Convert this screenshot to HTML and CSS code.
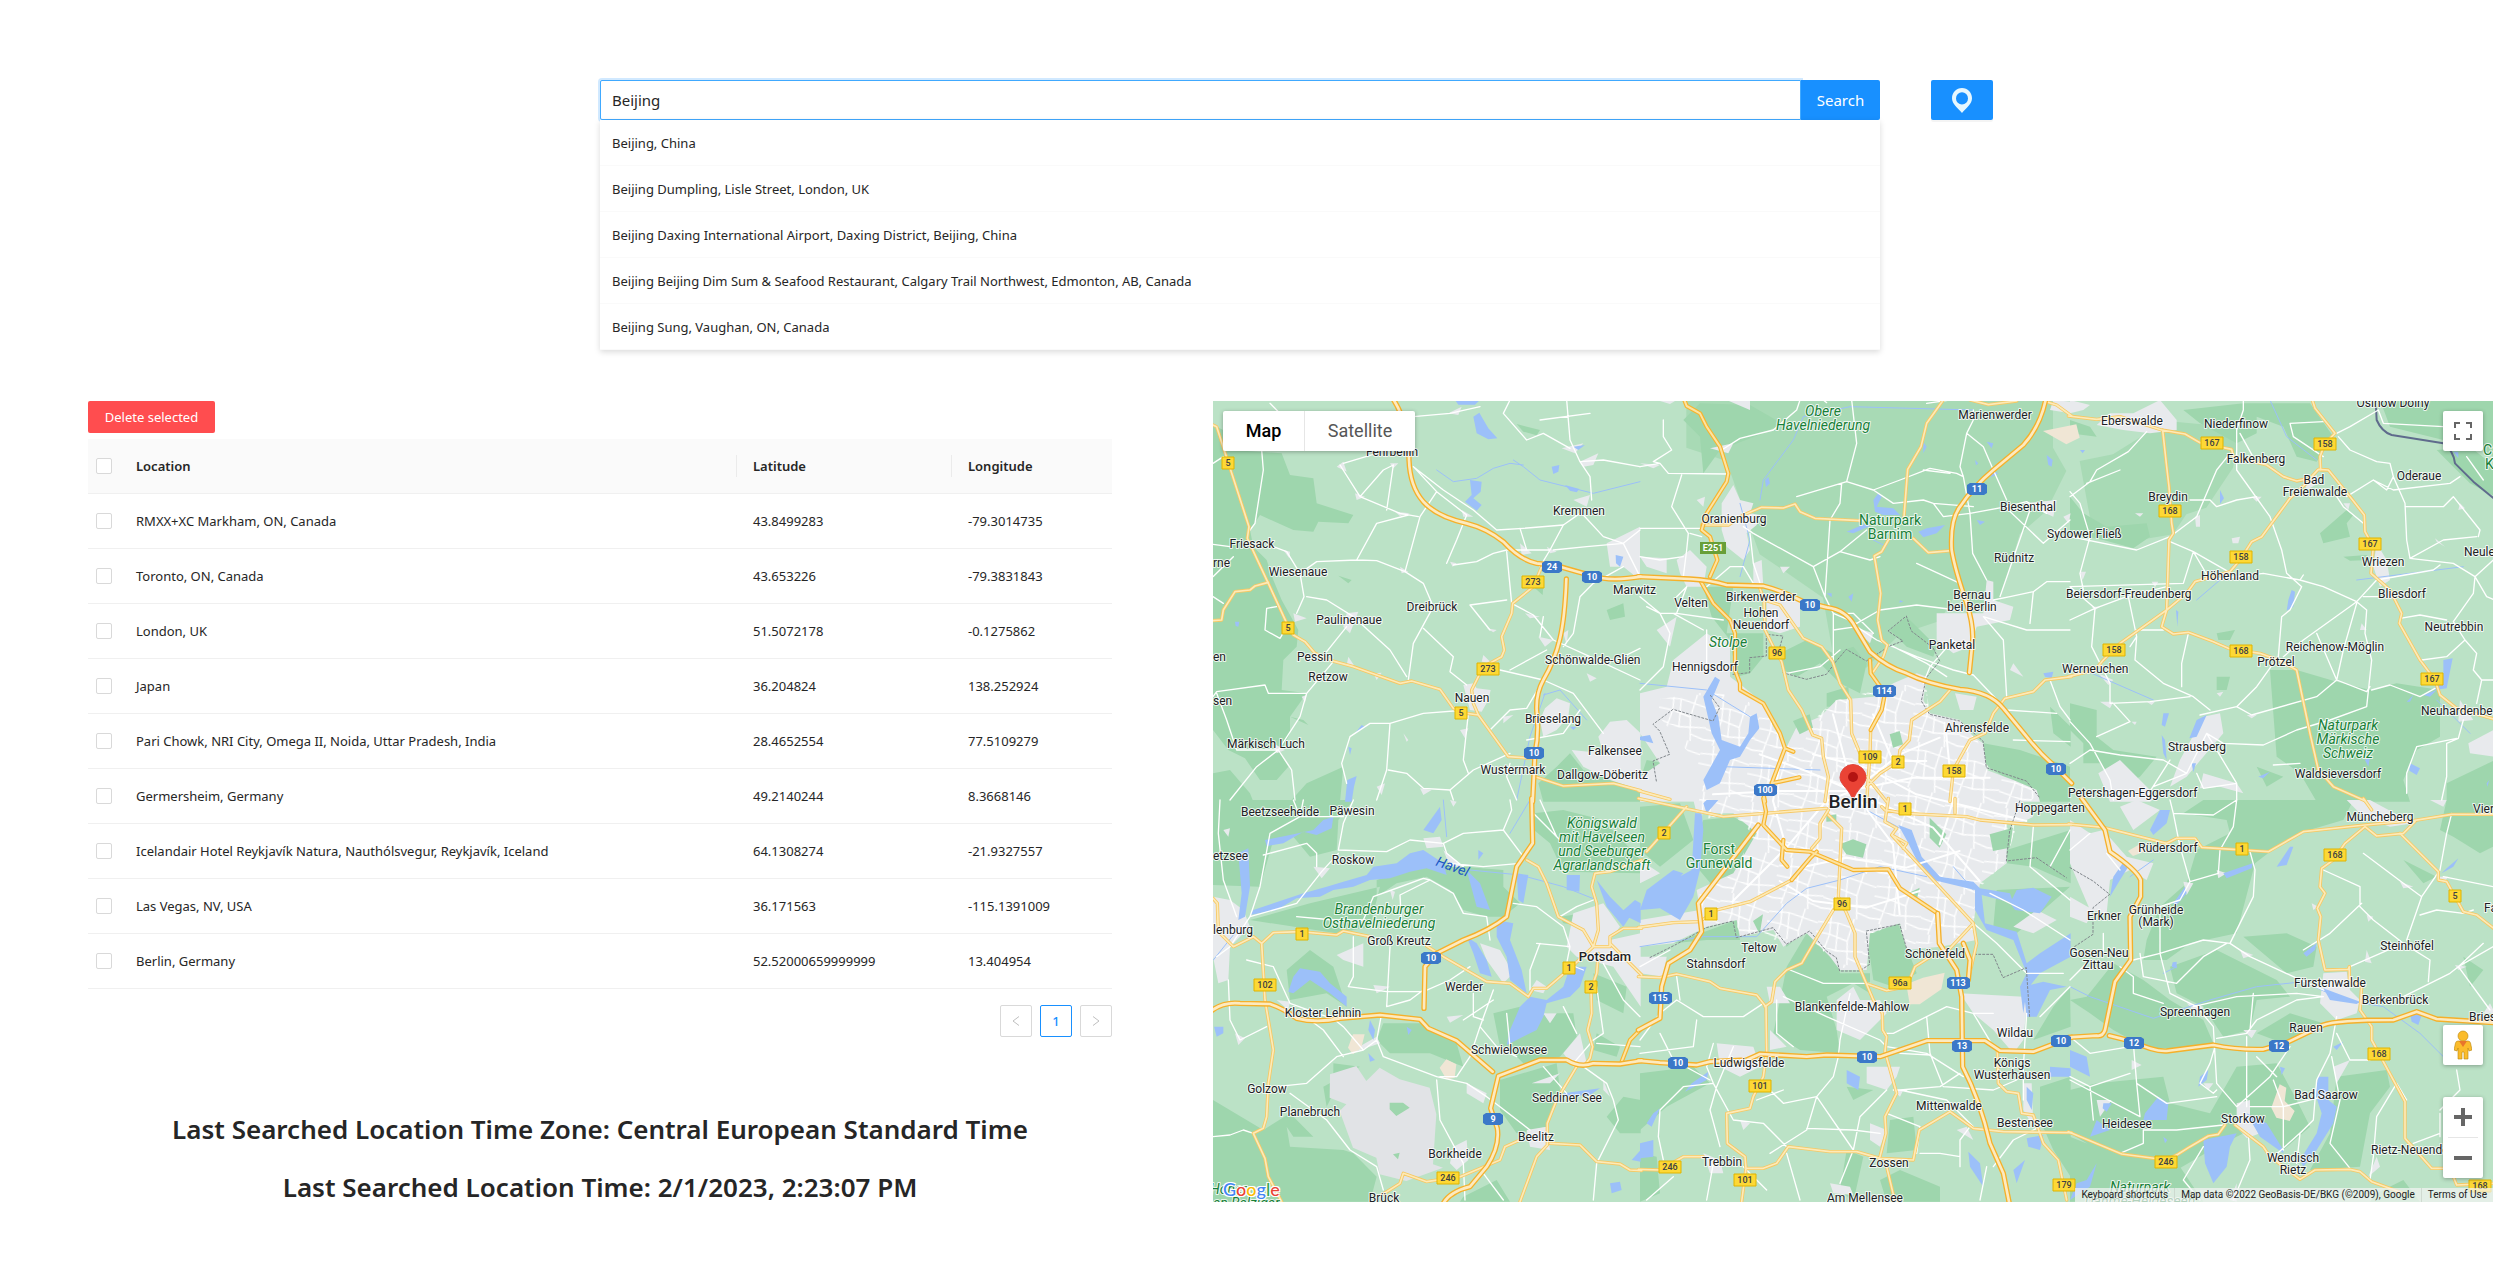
FILE: index.html
```html
<!DOCTYPE html>
<html lang="en">
<head>
<meta charset="utf-8">
<title>Location search</title>
<link rel="stylesheet" href="styles.css">
</head>
<body>
<main class="page">
  <form class="search">
    <div class="search-field">
      <div class="search-group">
        <input class="search-input" type="text" aria-label="Search location" value="Beijing">
        <button class="btn btn-search" type="button">Search</button>
      </div>
      <ul class="suggestions">
        <li class="suggestion">Beijing, China</li>
        <li class="suggestion">Beijing Dumpling, Lisle Street, London, UK</li>
        <li class="suggestion">Beijing Daxing International Airport, Daxing District, Beijing, China</li>
        <li class="suggestion">Beijing Beijing Dim Sum &amp; Seafood Restaurant, Calgary Trail Northwest, Edmonton, AB, Canada</li>
        <li class="suggestion">Beijing Sung, Vaughan, ON, Canada</li>
      </ul>
    </div>
    <button class="btn btn-locate" type="button" aria-label="Use my location">
      <svg width="20" height="25" viewBox="0 0 20 25"><path fill="#e6f7ff" fill-rule="evenodd" d="M10 0C4.300 0 0 4.500 0 10.200 0 16 5.500 19.500 10 25c4.500-5.500 10-9 10-14.800C20 4.500 15.700 0 10 0zm0 4.200a6 6.200 0 1 1 0 12.400 6 6.200 0 0 1 0-12.400z"/></svg>
    </button>
  </form>

  <div class="content">
    <section class="history">
      <button class="btn btn-delete" type="button">Delete selected</button>
      <table class="table">
        <colgroup><col class="col-check"><col><col class="col-lat"><col class="col-lng"></colgroup>
        <thead>
          <tr><th class="check"><input type="checkbox" aria-label="Select all"></th><th class="split">Location</th><th class="split">Latitude</th><th>Longitude</th></tr>
        </thead>
        <tbody>
          <tr><td class="check"><input type="checkbox" aria-label="Select Markham"></td><td>RMXX+XC Markham, ON, Canada</td><td>43.8499283</td><td>-79.3014735</td></tr>
          <tr><td class="check"><input type="checkbox" aria-label="Select Toronto"></td><td>Toronto, ON, Canada</td><td>43.653226</td><td>-79.3831843</td></tr>
          <tr><td class="check"><input type="checkbox" aria-label="Select London"></td><td>London, UK</td><td>51.5072178</td><td>-0.1275862</td></tr>
          <tr><td class="check"><input type="checkbox" aria-label="Select Japan"></td><td>Japan</td><td>36.204824</td><td>138.252924</td></tr>
          <tr><td class="check"><input type="checkbox" aria-label="Select Pari Chowk"></td><td>Pari Chowk, NRI City, Omega II, Noida, Uttar Pradesh, India</td><td>28.4652554</td><td>77.5109279</td></tr>
          <tr><td class="check"><input type="checkbox" aria-label="Select Germersheim"></td><td>Germersheim, Germany</td><td>49.2140244</td><td>8.3668146</td></tr>
          <tr><td class="check"><input type="checkbox" aria-label="Select Reykjavík"></td><td>Icelandair Hotel Reykjavík Natura, Nauthólsvegur, Reykjavík, Iceland</td><td>64.1308274</td><td>-21.9327557</td></tr>
          <tr><td class="check"><input type="checkbox" aria-label="Select Las Vegas"></td><td>Las Vegas, NV, USA</td><td>36.171563</td><td>-115.1391009</td></tr>
          <tr><td class="check"><input type="checkbox" aria-label="Select Berlin"></td><td>Berlin, Germany</td><td>52.52000659999999</td><td>13.404954</td></tr>
        </tbody>
      </table>
      <nav class="pagination" aria-label="Pages">
        <button class="page-btn" type="button" disabled aria-label="Previous page"><svg width="8" height="12" viewBox="0 0 8 12"><path d="M7 1.500 1 6l6 4.500"/></svg></button>
        <button class="page-btn page-current" type="button">1</button>
        <button class="page-btn" type="button" disabled aria-label="Next page"><svg width="8" height="12" viewBox="0 0 8 12"><path d="M1 1.500 7 6l-6 4.500"/></svg></button>
      </nav>
      <div class="summary">
        <h2 class="summary-line">Last Searched Location Time Zone: Central European Standard Time</h2>
        <h2 class="summary-line">Last Searched Location Time: 2/1/2023, 2:23:07 PM</h2>
      </div>
    </section>

    <section class="map" aria-label="Map">
      <svg class="map-canvas" viewBox="0 0 1280 801" preserveAspectRatio="xMidYMid slice">
        <defs>
          <pattern id="streets" width="150" height="140" patternUnits="userSpaceOnUse" patternTransform="rotate(12)">
            <path class="street" d="M0 30 60 22 150 34M0 95 70 105 150 92M35 0 42 60 30 140M105 0 98 70 112 140M42 60 98 70M60 22 70 105M0 60 42 60M112 120 150 128M0 128 30 125"/>
          </pattern>
          <g id="highways">
            <g transform="translate(-9,-3)">
              <path d="M548-5Q597 70 597 180 600 260 640 305 680 350 770 370 830 385 880 425 930 480 980 490L1040 497Q1100 515 1150 528 1200 545 1292 530M1069 537Q1065 650 1050 715 1035 780 1000 840 978 880 980 930 988 1000 975 1060L968 1205"/>
            </g>
            <g transform="translate(1281,-3)">
              <path d="M-5 530 150 537Q210 540 260 555L370 558Q420 570 490 605L560 622Q620 630 645 680L690 755Q740 800 800 820 860 850 960 868 1050 875 1090 925L1160 1010Q1200 1060 1240 1095L1295 1150M1217 0Q1200 80 1150 135L1060 210Q1000 260 960 320 930 360 935 450 945 510 980 610 1000 670 998 720L988 818"/>
            </g>
            <g transform="translate(-9,1197)">
              <path d="M965-5 968 130 920 200 890 350Q840 390 760 420L680 460 645 500 642 625M5 632Q40 605 90 610L180 612Q220 625 260 655 320 670 390 655L510 645 630 658 655 685 740 722 848 815M1295 782 1230 792 1150 790Q1110 805 1070 780L990 780 865 828 842 925 862 985Q870 1040 830 1100L780 1160Q720 1175 700 1210"/>
            </g>
            <g transform="translate(1281,1197)">
              <path d="M-5 782 60 788 170 795 210 785 320 780 360 762 500 770 560 765 720 770 860 722 1035 722 1080 752 1180 755 1295 712M893 340 898 430 950 510 965 590 968 800Q1020 900 1050 1030L1090 1120 1108 1210M-5 690 60 655 65 560 85 490 150 450 185 395 175 310 355 75M970 430 990 480 985 540"/>
            </g>
            <g transform="translate(2571,1197)">
              <path d="M35-5 105 90 120 155Q200 210 212 240L212 290 180 350 182 480 135 545 105 690Q98 710 80 707L-5 712M118 707 190 725Q250 755 290 753L430 735Q500 750 580 748L650 728 760 675Q800 660 970 660L1040 635 1100 657 1275 668"/>
            </g>
          </g>
          <g id="ring">
            <g transform="translate(1281,-3)"><path d="M133 0 140 18 180 40 200 80 240 140 265 220 260 245 200 340 185 390 210 410 232 480 210 530M180 540 220 610 270 660 285 700 285 810 300 850 300 870 370 910 420 1000 435 1045 395 1150M435 1045 460 1055M395 1150 478 1132M370 1180 375 1205M690 780 692 820 735 880 725 930 692 990"/></g>
            <g transform="translate(1281,1197)"><path d="M370-5 378 35 370 75 440 150 510 155 640 210 745 208 780 265 893 340M455 240 510 175 530 155M430 120 425 180 442 200"/></g>
            <g transform="translate(-9,1197)"><path d="M1295 685 1260 720 1235 785"/></g>
          </g>
          <g id="arterials">
            <g transform="translate(-9,-3)">
              <path d="M9 75 20 80 117 380 112 415 175 550 235 680 250 705 285 725 315 760 375 785 430 800 570 850 605 843 690 868 730 925 755 938 805 945 895 1070 965 1075M9 662 35 660 40 630 75 575 120 570 135 558 175 547M995 500 970 560 908 610 905 640 875 710 883 750 875 770 820 800 785 870 790 910 805 945M975 1130 1060 1158 1210 1150 1292 1172"/>
            </g>
            <g transform="translate(1281,-3)">
              <path d="M185 375 265 375 310 345 365 322 430 324 465 312 480 335 525 355 660 362M910 0 860 70 843 140 803 208 792 350M820 415 865 458 935 452M745 420 725 455 703 468 722 580 713 660 725 720 742 735 730 770 700 815M990 0 1045 14 1130 3M1218 5 1250 15 1295 48M358 560 372 600 375 690 410 760 425 785 445 870 485 930 518 1005 545 1015 550 1070 565 1130 555 1205M372 600 420 615 490 715 545 740 578 785 600 850 632 900 635 1000 660 1060M692 990 690 1060 680 1205M930 870 900 905 815 960 808 1020 780 1050 775 1085 720 1120 680 1160M1295 830 1215 840 1180 875 1095 895 1060 940 1035 1000 990 1020 940 1110 930 1205M680 1130 740 1205M-5 1172 90 1198"/>
            </g>
            <g transform="translate(2571,-3)">
              <path d="M-5 48 80 58 150 50 275 90 345 102 390 128 485 148 490 170 590 195 640 230 680 243 720 235 745 208 775 210 840 290 883 345 885 395 910 440 903 520 960 570 995 640 988 670 1050 780 1095 840 1110 885 1160 925 1275 958M727 0 735 25 795 100 765 130 750 170 752 210M278 90 290 200 297 260 305 370 310 400 297 420 290 630 275 680 310 702 355 697 430 725 475 745 570 760 625 780 680 810 720 1000 745 1110 790 1160 885 1202M720 240 660 295 575 410 545 425 510 480 480 515 375 545 350 580 290 630 150 730 100 780 75 810-5 830"/>
            </g>
            <g transform="translate(-9,1197)">
              <path d="M9 295 22 310 25 395 70 440 130 410 155 430 190 398 270 395 380 405 400 393 480 410M650 438 700 470 830 545 900 550 955 590 970 565 1010 565 1080 505 1150 440 1120 390 1045 350 1010 250 985 200 950 180M155 430 165 600 190 750 175 850 170 950 160 985 130 1000 165 1075 175 1130 215 1205M1295 385 1240 385 1200 410 1200 440 1150 440M1200 430 1295 525M1150 440 1165 390 1160 310 1145 260 1155 220 1200 215 1295 180M1165 460 1160 520 1143 570 1145 640 1133 690 1148 740 1140 775 1125 795M1100 800 1040 900 1012 970 1012 1010 1012 1035 980 1070 930 1205M515 1185 570 1150 580 1120 650 1145 750 1130 870 1080 885 1040 925 1022M1020 1030 1110 1035 1160 1085 1230 1092 1260 1110 1295 1112"/>
            </g>
            <g transform="translate(1281,1197)">
              <path d="M-5-5 250 50 560 25M140 20 20 155M725 20 735 30 795 40 980 50 1020 60 1180 75 1295 74M945-5 945 40M565 30 540 70 540 115 515 145M565 45 605 85 595 290 620 340 645 400 645 470 700 600 727 640 728 690 740 710 735 755 770 880 735 950 738 1000 720 1070M740 1100 765 1205M745-5 735 65 770 85 755 105 1000 370 930 445M1000 370 1010 430 985 540M755 105 800 130 790 145M455 240 330 305 230 330 180 365 100 368-5 382M580 330 520 430 485 490 440 510 405 545 395 605 375 620M-5 530 60 533 110 522 210 545 240 565 350 585 378 620 380 755 370 830 340 890 330 925 260 940 262 1030 315 1070 318 1105 370 1105 410 1090 445 1040 570 1055 650 1055 720 1075 820 1080 838 990 930 935 1000 985 1090 995 1295 998M318 1105 305 1205M1072 750 1075 850 1100 875 1135 880 1145 940 1180 945 1210 1030 1255 1080 1280 1200M-5 1108 60 1110 130 1070 190 1070M683 552 740 572 800 560 825 500 880 465"/>
            </g>
            <g transform="translate(2571,1197)">
              <path d="M-5 72 100 82 290 130 320 115 375 115 395 142 595 155 700 95 885 75 1030 62 1145 43 1275 43M880-5 905 30M885 80 825 130 790 180 755 205 750 260 765 280 742 325 752 350 745 420 765 510 835 508 838 500 838 540 875 560 870 630 905 680 905 720 1005 905 1005 1015 1085 1105 1120 1105M885 80 920 108 1000 100 1035 65M990 100 1105 215 1105 240 1130 245 1180 335 1220 345 1275 388M-5 995 155 1062 290 1080 325 1062 360 1040 415 1008 445 1003 465 975M495 975 580 1040 600 1070 690 1138 735 1110 840 1108 870 1115 905 1145 1000 1180M1150 1130 1160 1155 1275 1150"/>
            </g>
          </g>
        </defs>

        <g transform="scale(.3333333)">
          <rect class="land" width="3840" height="2403"/>

          <!-- nature parks and forests -->
          <path class="park" d="M1420 0H2520V140L2560 210 2500 330 2420 400 2360 600 2280 640 2240 560 2180 660 2060 700 1960 800 1860 760 1830 590 1700 500 1640 460 1540 180 1420 140ZM2600 180 2700 160 2860 60 3080 80 3060 200 2980 320 2920 340 2880 400 2760 420 2640 400Z"/>
          <g class="forest">
            <path transform="translate(-9,-3)" d="M9 75 50 95 70 150 215 160 240 225 310 235 320 310 430 345 415 370 325 365 310 395 250 390 150 345 120 390 130 440 170 480 190 540 215 600 265 690 260 740 220 780 215 870 290 880 240 950 240 1000 210 1060 235 1100 200 1140 150 1140 105 1075 55 1050 9 990ZM9 1120 60 1110 120 1180 130 1205H9ZM240 1205 290 1150 400 1100 390 1205ZM920 72 990 90 980 106 940 95ZM1040 1100 1080 1060 1120 1110 1292 1160V1205H1000L985 1150ZM385 527 425 540 415 550ZM240 950 280 960 295 975ZM970 560 1000 555 998 585ZM1190 630 1240 610 1245 650 1200 660Z"/>
            <path transform="translate(1281,-3)" d="M130 60 180 10 330 15 425 70 370 100 240 150 190 220 180 110ZM190 560 280 560 260 700 370 700 370 770 330 820 290 830 270 720 215 650ZM420 760 500 720 580 760 640 740 680 790 660 880 600 850 540 790 470 830 430 810ZM750 690 800 650 850 700 890 740 880 770 800 740ZM560 880 625 860 630 920 560 920ZM230 960 330 890 400 970 380 1010 230 1040ZM1030 1030 1140 1050 1290 1100V1205H1200L1120 1150 1030 1090ZM20 1080 70 1090 60 1130 0 1140ZM100 1150 200 1130 200 1205H60ZM1230 920 1292 980V1040L1240 1000Z"/>
            <path transform="translate(2571,-3)" d="M340 30 520 10 720 10 790 110 740 185 680 170 640 80 560 50 560 100 500 130 390 70ZM930 0H1270V170L1240 150 1120 120 960 80ZM1100 150 1200 140 1275 200 1275 290 1200 250 1150 200ZM0 290 40 340 110 380 230 370 240 410 190 445 100 420 0 400ZM750 400 830 330 850 345 830 370 840 410 760 430ZM820 470 890 465 900 480 840 482ZM600 810 680 810 800 845 900 870 980 850 1110 870 1110 1010 1040 1050 1000 1140 1020 1205H740L690 1120 620 1070ZM1130 1150 1275 1080V1205H1130ZM440 830 480 830 470 870 440 870ZM0 910 80 930 80 1010 130 1050 260 1070 210 1130 150 1160 90 1090 40 1090 40 1030 0 990ZM440 700 495 690 480 720 445 720ZM560 1100 640 1130 590 1160ZM0 60 60 80 80 110 0 100Z"/>
            <path transform="translate(-9,1197)" d="M9 0H430L385 60 380 150 300 170 250 110 190 120 150 260 9 255ZM500 290 560 250 650 230 720 270 760 330 830 350 880 350 930 310 880 260 880 210 760 200 640 190 500 240ZM510 260 480 380 380 400 120 360 300 310ZM230 510 300 450 370 500 410 620 350 580 240 600ZM970 40 1060 30 1180 60 1292 180V220L1060 215 1020 130 960 80ZM520 670 640 670 740 730 760 800 660 760 540 760 500 720ZM850 640 930 620 900 740 870 740ZM1010 640 1090 640 1100 710 1050 770 940 790 880 730ZM1150 520 1250 560 1240 640 1160 600ZM870 840 1040 790 1050 870 1010 980 920 1000 870 930ZM9 900 160 990 240 940 310 1010 250 1010 230 980 240 1040 400 1050 430 1060 500 1130 480 1205H160L130 1000 9 1010ZM370 790 450 800 340 860 350 920 370 880ZM1190 950 1240 890 1292 900V1000L1230 1000ZM760 1190 860 1140 900 1205H750ZM1160 700 1230 740 1220 770 1150 750ZM1050 350 1120 340 1130 380 1060 370ZM9 1000 170 1000 175 1205H9Z"/>
            <path transform="translate(1281,1197)" d="M0 20 120 10 160 120 60 200 0 150ZM190 60 280 50 350 90 320 210 220 260 170 200 170 110ZM440 500 500 400 590 480 600 520 690 520 690 580 640 550 560 590 590 690 600 760 480 750 400 700 420 600ZM670 410 770 360 800 440 830 520 760 560 700 540 690 470ZM100 430 290 360 300 420 200 420ZM630 130 670 120 680 160 640 165ZM1100 150 1292 90V250L1180 200 1100 190ZM1070 270 1290 260 1130 400 1060 380ZM1290 560 1240 620 1180 720 1292 680ZM1200 860 1292 830V1130L1240 1050 1200 960ZM0 820 160 800 210 850 80 920 0 990ZM750 960 820 950 830 1050 740 1060ZM720 1140 780 1110 900 1160V1205H740ZM620 1050 670 1070 640 1205 600 1170ZM400 390 450 380 500 390 440 440ZM440 620 540 640 580 680 560 720ZM620 860 700 870 680 880 640 900ZM0 1060 50 1070 60 1180 0 1205ZM820 270 840 260 830 300ZM930 50 960 130 1000 190 960 180Z"/>
            <path transform="translate(2571,1197)" d="M400 0H850L820 60 700 95 600 155 555 190 500 400 360 430 290 480 220 480 230 420 270 320 350 250 380 150 480 100 470 60 340 40ZM1130 0H1270V140L1230 160 1150 110 1110 90ZM0 600 50 590 130 490 220 540 300 600 400 660 430 730 380 745 230 745 130 690 60 640ZM300 500 440 450 620 540 660 590 560 600 540 690 460 710 400 620 320 580ZM520 410 650 400 740 440 730 500 650 520ZM660 640 760 670 640 730 560 700ZM800 830 950 810 960 860 900 940 870 1100 720 1110 780 1000ZM0 870 80 850 280 830 300 910 420 940 500 800 620 790 680 900 720 980 640 1050 560 980 440 1040 320 1110 200 1090 100 1060 0 1000ZM0 1010 150 1070 330 1100 400 1205H0ZM1000 180 1100 230 1060 250ZM1180 470 1240 510 1200 560ZM920 1180 1000 1140 1050 1205H900ZM600 860 640 950 600 990 540 950ZM480 0 570 0 560 30Z"/>
          </g>

          <!-- built-up areas -->
          <g class="urban">
            <path transform="translate(-9,-3)" d="M760 855 790 850 800 865 842 870 835 900 815 935 780 930ZM1005 925 1040 895 1080 910 1075 950 1040 990 1000 1010 990 960ZM1085 1050 1180 1060 1165 1010 1200 965 1250 960 1292 1000V1170L1200 1140 1120 1100ZM380 200 400 185 410 215ZM435 280 465 290 440 300ZM555 335 600 340 570 348ZM715 40 755 20 745 45ZM1055 145 1120 130 1095 160ZM1110 185 1165 160 1150 195 1120 200ZM410 640 445 635 420 700 400 680ZM945 640 990 650 960 655ZM985 710 1030 720 1005 740ZM220 450 240 455 238 475ZM250 640 290 655 255 665ZM930 430 965 460 935 465ZM1010 440 1040 455 1020 460ZM1190 430 1290 380V540L1240 500 1200 500ZM490 820 515 818 500 840ZM415 770 435 800 410 795ZM820 765 845 790 815 785ZM830 685 860 690 850 697ZM580 1000 595 1020 590 1025ZM750 990 775 985 765 1015ZM500 1160 525 1150 515 1185ZM630 1165 665 1170 640 1185ZM190 1030 225 1050 200 1060ZM880 950 910 945 880 970ZM275 890 290 885 285 908ZM540 190 565 190 550 205ZM1090 300 1140 285 1130 320ZM755 330 790 350 760 350ZM570 500 595 515 575 520ZM1130 820 1160 835 1140 845ZM720 485 740 490 728 500ZM1060 700 1075 690 1070 735Z"/>
            <path transform="translate(1281,-3)" d="M245 310 280 255 300 300 340 310 330 340 360 345 350 375 320 400 330 450 310 480 260 440 245 390ZM110 480 150 450 200 500 190 560 140 560 120 520ZM340 490 365 480 370 560 340 560ZM0 880 80 860 100 780 200 700 230 720 270 720 270 830 310 860 370 910 400 980 440 1040 470 980 540 950 590 900 700 890 760 850 830 820 860 830 850 900 870 940 960 960 1000 1010 1030 1030 1040 1110 1120 1140 1190 1170 1200 1205H0V1130L60 1090 0 1000ZM380 580 480 590 480 680 420 700 380 690ZM890 640 1030 640 1040 540 1060 545 1060 600 1120 620 1110 660 1010 680 990 740 940 760 890 720ZM260 0 330 0 330 30ZM210 145 280 130 265 160ZM170 300 195 290 190 320ZM0 470 80 475 80 520 20 500ZM50 690 110 650 90 740ZM50 0 110 0 90 12ZM1240 0 1292 5V40L1230 30ZM1150 310 1250 300 1240 350ZM420 500 450 500 430 520ZM945 880 1010 890 1000 930 960 930ZM640 680 700 700 690 730ZM1120 790 1150 830 1110 810ZM0 190 60 195 40 205ZM1270 350 1292 340 1285 370Z"/>
            <path transform="translate(2571,-3)" d="M190 40 270 0 320 60 320 90 240 100 160 90 80 75 120 40ZM920 430 950 480 960 540 930 560 910 500ZM400 950 450 940 460 1000 400 1070 350 1130 300 1160 330 1080ZM1170 900 1210 960 1165 965ZM1195 1030 1270 990V1070L1200 1060ZM0 0 60 15 40 30 0 40ZM400 1120 500 1150 520 1180 450 1160 390 1165ZM85 1120 150 1080 260 1190 240 1205 120 1205ZM85 820 130 840 115 855ZM820 310 840 310 835 330ZM485 415 510 410 505 430 488 430ZM195 340 220 340 210 350ZM545 290 575 290 560 305ZM1170 310 1185 325 1165 330ZM1095 415 1125 440 1100 425ZM245 545 265 545 255 562ZM65 620 90 620 75 630ZM30 515 48 515 38 540ZM90 905 130 905 120 925ZM185 965 200 965 195 975ZM875 670 890 690 870 690ZM530 945 560 945 545 955ZM375 350 390 345 390 380 378 380ZM440 880 460 875 450 890ZM700 240 740 225 745 250 710 270ZM230 905 255 905 245 915Z"/>
            <path transform="translate(-9,1197)" d="M9 290 60 300 100 330 120 380 60 440 55 540 25 550 9 470ZM1090 340 1180 310 1230 380 1200 420 1292 400V620L1210 500 1100 470 1070 440ZM640 115 690 110 700 140 650 145ZM700 150 760 200 720 200ZM310 200 360 205 335 235ZM810 430 870 450 910 520 880 550 830 480ZM380 465 460 430 460 500 400 480ZM980 540 1010 560 1000 580 960 570ZM770 850 830 880 820 910 770 880ZM730 1040 770 1020 775 1080 740 1110 720 1090ZM950 990 1010 980 1020 1050 960 1040ZM1060 760 1110 700 1130 790 1090 800ZM430 750 500 710 510 730 450 750ZM75 700 105 715 85 735ZM710 650 760 645 720 668ZM200 600 240 605 235 630ZM490 555 540 560 500 580ZM965 850 1050 820 1020 850ZM1180 840 1200 890 1180 870ZM720 0 740 5 730 20ZM1000 640 1040 640 1020 670ZM40 90 60 85 55 110ZM540 270 555 275 548 300Z"/>
            <path transform="translate(1281,1197)" d="M160 0 1130-5 1180 50 1140 70 1100 60 1100 190 1020 250 1000 370 1010 420 900 440 800 450 780 370 690 400 680 510 600 510 570 470 500 400 430 440 400 390 300 410 290 360 200 380 100 430 0 440V360L180 330 170 270 280 220 350 100 280 40 170 40ZM0 470 80 470 70 530 0 520ZM590 600 640 560 660 600 720 600 740 640 660 720 590 690ZM960 580 1150 590 1160 620 1150 720 1120 760 1060 690 1000 640ZM680 800 780 800 770 830 740 870 680 850ZM230 730 340 740 360 800 300 830 240 800ZM380 560 420 560 450 610 390 610ZM690 970 740 990 720 1040 690 1020ZM190 1060 240 1080 250 1120 210 1120ZM1150 850 1175 850 1180 980 1150 930ZM1120 380 1190 330 1250 360 1180 400ZM0 180 60 220 0 250ZM570 1150 630 1160 640 1185 580 1180ZM390 690 440 740 390 750ZM950 990 980 980 1000 1020ZM760 870 790 870 780 890ZM300 960 330 970 310 990ZM1080 640 1140 640 1130 680Z"/>
            <path transform="translate(2571,1197)" d="M0 60 60 100 100 90 170 170 250 190 230 240 180 210 120 240 110 340 60 330 0 190ZM150 20 200 0 270 30 190 90ZM760 520 830 515 840 570 870 600 860 640 800 660 750 610ZM500 910 540 900 540 960 570 1000 530 1015 500 980ZM1080 0H1130L1120 20ZM80 900 125 900 90 950ZM510 450 550 465 520 475ZM520 690 560 690 545 715ZM350 610 400 620 380 640ZM110 200 150 190 140 240ZM340 245 370 250 350 285ZM440 210 470 220 445 235ZM990 245 1030 260 1000 265ZM890 450 905 490 885 485ZM890 345 910 350 895 365ZM1105 230 1135 230 1120 250ZM920 1070 895 1130 930 1100ZM1240 640 1275 640 1260 610ZM185 780 215 795 185 810ZM725 310 745 320 730 330ZM480 1200 500 1150 500 1205ZM0 290 70 330 50 370 0 350ZM830 0 900 0 1030 70 960 80 880 50ZM1155 495 1190 500 1165 510ZM400 850 430 850 415 870ZM790 800 840 780 800 850Z"/>
          </g>
          <path class="fallow" d="M351 2020 430 1995 460 2040 500 2000 560 2035 650 2060 670 2140 660 2290 690 2300 580 2340 500 2320 490 2270 420 2240 380 2130 400 2110 350 2090Z"/>
          <path class="forest" d="M530 2105 570 2105 590 2120 550 2145 530 2125ZM540 2260 560 2255 555 2275Z"/>
          <path class="sand" d="M405 1940 420 1900 455 1900 445 1940 420 1960ZM680 2000 700 1975 730 1990 725 2030 700 2035ZM2080 1750 2130 1730 2195 1715 2185 1765 2120 1810 2090 1810ZM2490 90 2590 70 2600 110 2560 130ZM3175 2120 3200 2050 3220 2060 3215 2100 3245 2130 3230 2160 3190 2150ZM2745 1350 2780 1330 2800 1350 2760 1365Z"/>

          <path class="city-grid" d="M1300 900 1500 870 1660 920 1720 1040 1860 900 2060 850 2140 860 2150 940 2290 1010 2330 1110 2480 1170 2420 1240 2380 1380 2290 1470 2280 1600 2090 1640 2050 1570 1970 1600 1960 1700 1880 1700 1780 1600 1700 1620 1580 1590 1560 1560 1450 1580 1460 1480 1560 1420 1620 1300 1560 1240 1440 1260 1480 1120Z"/>
          <path class="forest" d="M1880 1330 1920 1315 1960 1330 1950 1370 1900 1360ZM1740 960 1790 940 1800 980 1760 1000ZM2150 1250 2200 1300 2180 1340 2150 1310ZM2330 1300 2400 1280 2390 1340 2340 1350ZM1840 1245 1870 1240 1870 1260 1840 1262ZM2030 1000 2060 990 2070 1030 2040 1040ZM1620 1560 1650 1540 1640 1600ZM2080 1480 2120 1460 2110 1500Z"/>

          <!-- water -->
          <g class="water">
            <path transform="translate(-9,-3)" d="M790 50 808 38 835 85 862 115 835 118 800 100ZM780 240 815 245 812 275 790 295 815 315 800 332 765 305 785 285ZM735 0H810L795 14 745 14ZM1025 200 1048 195 1045 215 1030 222ZM1065 255 1108 267 1100 277 1080 272ZM435 1000 455 975 467 982ZM412 1140 440 1128 432 1160 425 1205H405ZM1217 465 1240 470 1230 500 1218 490ZM75 665 88 665 85 680 77 678ZM415 1040 425 1045 420 1065ZM1090 140 1125 135 1105 150ZM1080 980 1100 980 1090 990Z"/>
            <path transform="translate(1281,-3)" d="M375 240 385 230 390 250 378 262ZM700 300 715 280 725 290 710 320 760 325 780 345 730 345 705 335ZM835 395 860 385 915 375 890 400 850 412ZM1040 125 1060 130 1055 145ZM1220 165 1238 180 1235 200 1225 195ZM1005 180 1015 190 1008 196ZM850 125 860 140 850 160ZM620 395 680 370 690 378 640 400ZM560 580 575 580 575 592ZM625 590 640 580 635 605ZM330 950 350 940 358 985 330 1020 300 1070 270 1080 240 1150 200 1170 190 1140 240 1050 215 1000 190 890 225 830 240 840 215 900 235 950 245 1020 300 1040 325 1000ZM1210 820 1240 815 1235 835 1215 830ZM1050 210 1075 220 1055 232ZM1010 360 1035 365 1020 375ZM780 600 790 605 778 608ZM0 1010 30 1005 40 1030 0 1020Z"/>
            <path transform="translate(2571,-3)" d="M665 570 675 575 670 620 650 632 655 600ZM1120 780 1148 775 1130 865 1095 870 1100 830 1120 820ZM380 960 410 945 380 1010 358 1015ZM280 940 297 940 285 980 275 975ZM275 1005 285 1020 290 1080 280 1060ZM1020 1090 1050 1105 1040 1125 1018 1112ZM885 1080 900 1070 895 1100ZM450 270 462 295 450 312ZM30 150 45 150 38 160ZM318 630 325 635 322 680ZM1010 905 1030 885 1020 905ZM365 1090 378 1090 370 1117ZM565 1130 600 1115 580 1135ZM1250 1150 1258 1140 1252 1160ZM1150 155 1165 155 1165 175ZM1060 885 1100 870 1080 890Z"/>
            <path transform="translate(-9,1197)" d="M165 120 240 105 310 90 340 60 370 50 365 85 320 105 280 95 220 130 170 138ZM85 160 115 145 120 260 105 350 85 360 95 280ZM190 310 280 280 350 260 400 245 470 225 490 200 560 190 600 160 640 150 700 190 710 225 650 205 600 215 540 235 480 240 430 260 370 270 330 290 260 295 200 330 120 345 130 330ZM770 210 810 250 840 330 800 320ZM920 220 955 225 940 310 925 300ZM1070 225 1110 225 1108 275 1070 270ZM1160 240 1200 290 1260 350 1240 380 1190 320ZM860 360 910 370 900 420 935 510 950 580 900 540 890 470 860 410ZM770 410 800 430 830 480 845 530 810 520 790 460ZM1060 560 1080 500 1130 500 1110 560 1080 590 1010 610 1000 650 980 690 890 735 900 690 930 620 960 590 1010 600ZM270 505 330 515 360 550 410 590 410 620 360 580 300 540 250 580 235 575 250 530ZM640 90 690 20 695 60 670 100ZM480 660 495 690 490 720 475 690ZM590 680 605 690 595 705ZM12 680 40 680 40 700 20 710ZM1275 300 1292 310V370L1230 340ZM1060 880 1170 865 1140 885 1060 890ZM1265 1080 1292 1050V1085ZM475 760 495 780 480 785ZM1200 1150 1230 1145 1235 1170 1205 1180ZM805 150 820 160 805 180Z"/>
            <path transform="translate(1281,1197)" d="M165 40 185 40 190 90 180 210 160 290 120 360 60 325 0 330 20 270 100 240 155 210ZM20 270 100 210 130 220 60 290ZM775 75 815 90 845 170 900 230 1000 245 1020 265 1110 280 1120 310 1025 285 1035 370 1130 395 1160 490 1200 460 1292 400V470L1200 520 1160 570 1150 640 1140 560 1160 520 1120 420 1040 390 1005 330 1005 270 880 240 840 200 800 120ZM1130 270 1180 263 1235 290 1200 340 1125 330 1110 310ZM1150 560 1210 545 1280 560 1230 570 1190 650 1160 650ZM620 810 660 830 655 870 620 850ZM985 1055 1020 1090 1030 1160 990 1100ZM1160 1015 1210 1005 1200 1050 1165 1040ZM1160 860 1180 880 1175 930 1160 900ZM0 1030 40 1020 40 1070 0 1075ZM155 850 205 815 200 840 135 875ZM40 940 60 925 35 980 20 970ZM1120 1110 1155 1080 1130 1150ZM1230 800 1292 805V830L1230 830ZM200 0 235 0 200 40 190 10Z"/>
            <path transform="translate(2571,1197)" d="M240 90 270 30 300 30 290 70 250 105ZM130 230 165 180 175 200 150 240 120 290ZM460 220 548 190 545 205 470 235ZM620 200 660 140 670 140 650 195ZM310 310 345 260 350 280 315 320ZM1130 205 1165 175 1150 200 1115 220ZM400 1020 500 1000 480 1040 470 1100 430 1150 405 1090ZM745 830 775 830 775 900 800 920 790 970 740 1050 700 1100 690 1080 740 1000 755 940 735 880ZM225 940 265 890 295 910 290 960 220 960ZM530 940 590 970 640 1050 640 1060 570 1010ZM80 960 120 990 60 1010ZM700 460 740 430 735 450 710 470ZM320 485 320 505 305 500 308 487ZM0 750 50 770 60 830 0 800ZM390 830 415 810 410 840 385 860ZM1020 640 1055 645 1045 675 1025 665ZM790 740 820 725 800 750ZM50 1140 80 1090 60 1160 0 1200 20 1150ZM630 800 645 805 635 825ZM760 565 800 580 870 605 860 612 780 600ZM280 1010 292 1020 285 1030ZM100 910 125 910 110 935 98 925Z"/>
          </g>
          <g class="stream">
            <path transform="translate(-9,-3)" d="M680 210 730 245 800 235 850 205 900 190 940 195M1290 245 1150 280 990 240 940 200 910 180M1000 885 1050 870 1130 960M920 1200 960 1010 1005 880"/>
            <path transform="translate(1281,-3)" d="M360 300 370 240 460 120 490 50 630 20M630 20 1000 30M330 950 200 870 0 850M300 310 330 420 300 530M700 420 740 440M250 1100 540 1110"/>
            <path transform="translate(2571,-3)" d="M600 0 650 110 740 180M860 540 1180 500M20 800 250 900M450 540 380 600M1100 900 1200 1000"/>
            <path transform="translate(-9,1197)" d="M780 210 930 225 1060 260 1160 300M900 100 960 0M10 480 90 380M700 0 710 110"/>
            <path transform="translate(1281,1197)" d="M0 440 190 410 350 410 440 310 500 265 600 240 720 200 860 230M680 30 790 90M940 200 1000 270"/>
            <path transform="translate(2571,1197)" d="M0 560 60 590 250 655 420 600 560 560 700 545 820 600 940 620 1050 700 1130 780M320 500 280 520M180 230 250 180"/>
          </g>
          <path class="border-river" transform="translate(2571,-3)" d="M918 22 920 60Q935 95 965 105L1120 130Q1150 150 1155 190L1210 245 1275 298"/>

          <!-- minor roads -->
          <g class="minor">
            <path transform="translate(-9,-3)" d="M9 433 60 440M120 390 135 370 160 210 155 150M190 440 230 455 270 520 282 590 260 640M270 520 320 485 440 480 500 482 585 515 640 550 670 620 610 730 595 840M585 515 630 350 680 275 610 200 700 270 790 330 860 390 940 385 1060 375 1110 340M930 385 950 450M1060 375 1020 450 890 450 850 460 800 485 730 495M890 455 905 610 970 645 1030 720 1140 770 1290 840M1020 450 990 500M1145 300 1140 230 1110 185 1080 120 1070 0M1110 185 1180 180 1290 200M1120 345 1180 410 1240 430 1290 390M1240 430 1290 530M1030 450 1130 440 1240 430M610 50 720 40 810 20M900 0 880 40 950 120 1000 100 1080 145M180 10 205 35M390 195 450 290 520 210 550 195M400 190 500 160M450 290 570 340 625 350M595 345 500 370 440 480M550 195 530 330M680 275 770 345 740 420 710 490M640 685 730 770 720 815 770 855M780 615 890 600M780 615 840 690M370 785 290 880 270 950 205 1050M290 880 175 880 165 855 20 875 9 890M350 755 410 680M290 590 350 600 430 650 540 750 590 830M170 625 200 620M170 625 165 690 210 715 225 690M205 1050 245 1110 255 1200M205 1050 140 1100 60 1200M205 1050 80 1050 50 960 20 880M770 930 640 940 540 970 480 970M540 970 530 1110 500 1200M775 940 760 1080 775 1120M535 1110 590 1120 640 1165 720 1170 790 1110 900 1060M720 1170 730 1200M480 970 420 1010 395 1090 410 1150M840 990 900 930 950 925M950 925 1000 840M870 810 1000 840 1090 880 1180 1000M900 1090 890 1130 920 1200M950 1020 1060 1000 1110 930M900 810 1010 750M1150 550 1110 590 1090 700 1060 740M1150 550 1240 500M1290 745 1220 780M990 60 1140 40M9 190 40 170M9 530 70 470M9 590 40 610M1000 650 990 710"/>
            <path transform="translate(1281,-3)" d="M0 200 60 190 85 220 265 222M60 190 40 185M125 225 95 320 145 400 140 450 130 530M0 385 150 385 185 385M150 400 185 410M245 150 300 115 400 90 470 30 480 0M70 60 70 110 95 150 40 185M635 0 650 130 620 245 470 290M620 245 700 270 760 310 850 300 880 310 910 350 990 340 1100 320 1160 305 1220 340M1000 60 980 100 960 200 970 230 950 220 870 205 780 240 700 270M970 230 990 340 998 460 1040 540M980 100 1030 140 1060 210 1100 300M605 250 600 310 570 360 555 590 580 640 580 790M555 590 520 500 340 400 310 380M520 500 600 455 680 390M600 455 690 480 720 470M330 400 340 490 360 550M0 590 60 640 110 640 140 560 110 590M190 690 100 640M200 690 200 800M60 640 90 700 70 800 0 870M580 640 650 670 720 630 830 615 950 630M580 690 650 680 710 720 830 770 940 810 1000 825 1100 930 1250 940M760 740 860 790 920 830M1030 650 1090 720 1100 890M1030 650 1160 690 1290 690M1060 600 1110 590 1180 575 1220 545 1290 545M1170 330 1080 590M1230 840 1260 920 1290 960M850 210 930 220M940 720 870 800 850 850M110 640 250 660M0 470 60 480 130 470M930 0 860 10M550 0 560 8M1180 575 1170 670M880 310 1000 320M60 640 20 620M200 560 270 500 310 500 340 550M600 640 640 640 700 700M1000 30 1000 60M1120 1020 1290 1025M600 750 540 800 440 820M1100 325 1210 430 1290 360M830 490 960 550"/>
            <path transform="translate(2571,-3)" d="M230 95 175 155 80 210 60 245 0 290M500 80 500 210 600 350 635 450 650 520 695 560 660 630 635 650 625 770M480 160 440 210 380 350 300 410 200 450 0 410M500 90 520 30 520 0M510 100 560 190M300 425 370 455 475 515M370 455 420 540 580 520 690 540 760 560 860 605 920 540M370 455 340 550 0 560M0 560 75 625 65 740 120 850 120 910 240 905 360 890M75 625 170 590 290 560M0 660 75 625M175 590 200 710 195 780 280 850 370 890 420 930M200 690 280 690M355 700 335 790 335 860M390 945 500 920 560 860 610 790M500 920 545 945 740 890 800 840 820 750 860 610M410 1000 460 1030 580 1035 680 990 780 960 890 920 905 780 885 700 890 630 860 605 700 720 640 770M905 870 960 855 1050 890 1095 865M700 525 690 540M0 965 60 1030 120 1140 130 1200M60 1050 150 1065 280 1080 350 1120 250 1160M410 1000 350 1120M410 1000 500 1150 500 1200M500 1150 400 1165 380 1120M805 110 840 150 920 185 960 190 970 230 1005 310 1010 420 1020 475M925 30 840 80 800 100M925 30 940 70 1120 80M970 230 950 270 910 240 830 290M1005 320 1120 320 1150 290 1230 390 1225 410M1020 475 1150 490 1215 530 1270 480M1215 530 1250 590 1275 600M1215 530 1210 580 1150 665 1185 720 1130 770 1055 780M1185 720 1220 760 1210 810 1235 840 1275 840M920 540 1090 510 1110 495M1020 475 1120 420 1220 410M990 655 1050 645 1130 660M1180 960 1165 1015 1130 1030 1130 1130 1115 1200M1160 1015 1040 1040 1010 1120 1010 1180M800 840 890 875 900 860M800 840 740 700M660 70 760 65M660 70 670 110 760 170M880 370 820 320 800 290M880 590 930 590M910 240 970 270 1140 250 1170 230M0 275 30 310 60 410 30 520 40 570M360 300 420 300 440 320 500 300 560 290M200 710 180 740M1235 840 1220 910M150 210 50 250M1190 170 1240 240M300 1080 230 1190M0 1090 60 1050M130 910 180 965 80 1010M610 1095 690 1090"/>
            <path transform="translate(-9,1197)" d="M30 0 25 100 40 240 80 350M270 50 180 100 150 260 120 350M270 50 250 0M160 165 290 130 320 160 320 200M270 50 400 50M430 0 400 70 385 150 530 155 600 120 700 130 710 160 760 200M335 215 385 160M335 215 260 310 120 350M120 350 60 440 20 470M700 130 760 100 880 90 905 30 900 0M880 90 940 170 930 190 820 200 720 190M545 270 490 290 460 360 370 360 260 350M545 270 640 235 660 240 730 280 760 340 830 350 840 420M660 240 570 285 575 380M540 440 530 620 600 600 640 570M430 410 430 530 415 560 530 575 640 575 720 540 780 500M110 480 190 500 240 610 350 650M55 540 60 660 90 720 170 680M350 640 400 680 460 750 380 770 290 850 200 860M460 750 500 720 515 640M500 720 520 770 600 800 680 830 770 850 830 890 870 920 960 990M680 840 690 960 760 1090 765 1200M240 880 350 960 420 1050 500 1100 520 1170M9 1010 60 1005 100 990 130 1000M780 770 740 830 690 830M780 770 810 680 850 570M810 680 860 740 920 770M790 580 790 650 820 660M910 310 980 320 1060 380 1080 440 1070 490 1120 510M1080 440 980 430M990 430 960 510 960 570M1180 490 1240 600 1290 650M1090 790 1150 720 1180 700 1160 560M1120 800 1190 850 1210 900 1225 960 1160 1090 1150 1200M1060 620 1100 700M1000 800 1070 880M820 1120 880 1200M280 0 270 50M970 40 1050 120M990 0 1040 110M1160 730 1290 740M890 640 900 740M300 660 340 690 400 770M1050 350 1100 320 1150 300M760 660 850 600"/>
            <path transform="translate(1281,1197)" d="M450 510 550 550 690 550M430 590 560 650 720 720 740 740 860 760 970 830M630 580 600 720 595 770 580 830 530 890 430 910 380 860M530 890 500 990 390 1060M530 890 640 1050 600 1150M220 850 130 860 60 930 55 1010 70 1080M220 730 200 800 220 850 280 960 370 970 440 1040M0 720 60 640 110 600 190 650 310 650 370 610M110 530 120 600M410 600 410 700 460 740M740 940 840 980 830 1060M780 870 920 900 1000 980M860 650 760 700 730 700M860 650 920 620 1000 640 1060 740M860 650 870 760 910 860 1060 870 1130 840M840 1060 900 1060 960 1070M990 980 960 1020 960 1100M1060 1100 1120 1020 1200 980M1160 640 1150 800 1150 900M1000 370 1070 430 1160 520 1270 520M1050 280 1150 330 1290 420M960 820 900 860 780 870M200 1200 220 1090M380 1170 310 1100M20 1200 100 1130M440 1060 480 1200M350 900 430 870M800 870 760 870M1200 650 1290 560M1000 640 1060 640M780 760 870 765M170 660 160 740 0 760M60 700 100 780 210 840M280 740 230 860 210 930 240 1040M500 985 640 990 720 1000M740 870 660 950 640 1050M1230 200 1290 90M1180 80 1170 200 1290 300M1040 1100 1020 1200M90 450 0 500"/>
            <path transform="translate(2571,1197)" d="M500 0 490 80 450 150 445 220 360 245 330 140 310 40 300 0M310 40 430 45 500 0M360 245 330 300 270 320 270 460 300 580 380 620 430 680 440 850 500 920 600 830 660 740M540 155 555 210 550 290 480 430 400 420 270 460 190 480M480 430 540 470 670 530 760 570M370 620 500 590 680 580 760 590M440 715 530 700 560 660 680 600 760 590M435 740 420 790 390 850 430 880 440 870M190 730 200 850 210 950 0 840M200 850 290 910 440 890M150 1060 220 1030 220 990 320 990 460 975M535 1000 540 1080 490 1200M540 920 640 920 760 890M530 920 530 710M610 840 640 920 640 1050M800 650 780 760 740 840 730 960 690 1000 680 1090M800 700 840 780 900 780M785 770 810 900 780 1030 840 1105M980 850 920 950 910 1070 900 1140M980 850 1010 900M760 210 870 260 870 320 910 360 1000 430M875 310 780 400M1145 40 1130 100 1110 210 1055 290 1010 420M1055 290 1000 250 880 160M1120 230 1270 260M1050 345 1100 330 1180 340M840 500 1000 430 1080 480 1075 545M1000 590 1140 520 1165 500 1260 630M1165 500 1240 430M1165 500 1270 440M960 600 1000 590M210 460 220 530 320 550 400 470 470 430M150 500 190 530 190 580 280 610M560 770 620 830M550 580 540 690M0 710 60 760 180 740M60 860 180 820M0 830 60 860 70 960M1160 810 1170 870 1110 930M1180 340 1210 330M110 160 150 210M100 400 100 460M0 150 60 100M700 450 780 400M600 1080 700 990M400 1040 340 1140 390 1200M1030 1030 1110 1000M1110 940 1110 1010M0 540 50 490"/>
          </g>
          <path class="major" d="M1560 1500 1720 1340 1840 1200 1930 1165 2100 1130 2330 1130M1500 1180 1700 1170 1920 1170M1920 1170 2160 1280 2300 1440M1920 1170 2060 1060 2180 1010M1860 940 1920 1170M1760 1400 1900 1370 2080 1400 2240 1350M1800 1060 1960 1100 2110 1180M1640 1060 1780 1110 1920 1170M2110 1180 2280 1220 2440 1260M1700 1440 1800 1500 1960 1520 2120 1470M1920 1170 2040 1330 2060 1540M1720 1340 1680 1200 1700 1090M1980 940 2040 1080 2140 1080M2200 1000 2220 1200 2180 1330"/>
          <path class="city-limit" d="M1330 1140 1320 1080 1370 1060 1340 990 1320 970 1380 925 1500 960 1520 920 1490 880M1560 820 1610 815 1610 770 1660 765 1660 700 1710 705 1700 740 1710 815 1780 835 1840 820 1870 780 1900 745 1960 780 2030 735 2070 720 2025 690 2080 645 2095 690 2160 740 2180 780 2140 830 2125 900 2150 940 2240 960 2310 1020 2320 1100 2440 1140 2480 1190M2420 1200 2390 1290 2380 1380 2470 1370 2560 1430M2285 1660 2340 1660 2370 1730 2440 1700 2450 1850M2080 1640 2060 1570 1960 1590 1970 1690 1940 1710 1880 1710 1870 1670 1840 1650 1790 1590 1720 1630 1680 1580 1570 1610 1560 1560 1480 1580 1390 1630 1310 1670M2571 1400 2640 1440 2690 1480 2640 1520 2640 1600 2580 1640"/>

          <use href="#arterials" class="arterial-edge"/>
          <use href="#arterials" class="arterial-fill"/>
          <use href="#ring" class="ring-edge"/>
          <use href="#ring" class="ring-fill"/>
          <use href="#highways" class="highway-edge"/>
          <use href="#highways" class="highway-fill"/>
        </g>

        <!-- road number shields -->
        <g class="shield">
          <g transform="translate(-3,-1)">
            <path class="plate" d="M12 57h12v12h-12zM312 176h22v12h-22zM72 222h12v12h-12zM267 263h22v12h-22zM245 307h12v12h-12z"/>
            <text x="18" y="66">5</text><text x="323" y="185">273</text><text x="78" y="231">5</text><text x="278" y="272">273</text><text x="251" y="316">5</text>
            <path class="motorway" d="M335 161h14l3 2v8l-3 2h-14l-3-2v-8zM375 171h14l3 2v8l-3 2h-14l-3-2v-8zM317 347h14l3 2v8l-3 2h-14l-3-2v-8z"/>
            <g class="on-blue"><text x="342" y="170">24</text><text x="382" y="180">10</text><text x="324" y="356">10</text></g>
          </g>
          <g transform="translate(427,-1)">
            <path class="euro" d="M60 142h26v12h-26z"/>
            <path class="plate" d="M129 247h16v12h-16zM219 351h22v12h-22zM252 356h12v12h-12zM303 365h22v12h-22z"/>
            <text x="137" y="256">96</text><text x="230" y="360">109</text><text x="258" y="365">2</text><text x="314" y="374">158</text>
            <path class="motorway" d="M163 199h14l3 2v8l-3 2h-14l-3-2v-8zM330 83h14l3 2v8l-3 2h-14l-3-2v-8zM236 285h17l3 2v8l-3 2h-17l-3-2v-8zM409 363h14l3 2v8l-3 2h-14l-3-2v-8zM117 384h17l3 2v8l-3 2h-17l-3-2v-8z"/>
            <g class="on-blue"><text x="73" y="151">E251</text><text x="170" y="208">10</text><text x="337" y="92">11</text><text x="244" y="294">114</text><text x="416" y="372">10</text><text x="125" y="393">100</text></g>
          </g>
          <g transform="translate(857,-1)">
            <path class="plate" d="M131 37h22v12h-22zM244 38h22v12h-22zM89 105h22v12h-22zM160 151h22v12h-22zM289 138h22v12h-22zM33 244h22v12h-22zM160 245h22v12h-22zM351 273h22v12h-22z"/>
            <text x="142" y="46">167</text><text x="255" y="47">158</text><text x="100" y="114">168</text><text x="171" y="160">158</text><text x="300" y="147">167</text><text x="44" y="253">158</text><text x="171" y="254">168</text><text x="362" y="282">167</text>
          </g>
          <g transform="translate(-3,399)">
            <path class="plate" d="M86 128h12v12h-12zM44 179h22v12h-22zM353 162h12v12h-12zM375 181h12v12h-12zM227 372h22v12h-22z"/>
            <text x="92" y="137">1</text><text x="55" y="188">102</text><text x="359" y="171">1</text><text x="381" y="190">2</text><text x="238" y="381">246</text>
            <path class="motorway" d="M214 152h14l3 2v8l-3 2h-14l-3-2v-8zM276 313h14l3 2v8l-3 2h-14l-3-2v-8z"/>
            <g class="on-blue"><text x="221" y="161">10</text><text x="283" y="322">9</text></g>
          </g>
          <g transform="translate(427,399)">
            <path class="plate" d="M259 3h12v12h-12zM18 27h12v12h-12zM194 98h16v12h-16zM65 108h12v12h-12zM249 177h22v12h-22zM109 280h22v12h-22zM19 361h22v12h-22zM94 374h22v12h-22zM413 379h22v12h-22z"/>
            <text x="265" y="12">1</text><text x="24" y="36">2</text><text x="202" y="107">96</text><text x="71" y="117">1</text><text x="260" y="186">96a</text><text x="120" y="289">101</text><text x="30" y="370">246</text><text x="105" y="383">101</text><text x="424" y="388">179</text>
            <path class="motorway" d="M310 177h17l3 2v8l-3 2h-17l-3-2v-8zM12 192h17l3 2v8l-3 2h-17l-3-2v-8zM315 240h14l3 2v8l-3 2h-14l-3-2v-8zM414 235h14l3 2v8l-3 2h-14l-3-2v-8zM220 251h14l3 2v8l-3 2h-14l-3-2v-8zM31 257h14l3 2v8l-3 2h-14l-3-2v-8z"/>
            <g class="on-blue"><text x="318" y="186">113</text><text x="20" y="201">115</text><text x="322" y="249">13</text><text x="421" y="244">10</text><text x="227" y="260">10</text><text x="38" y="266">10</text></g>
          </g>
          <g transform="translate(857,399)">
            <path class="plate" d="M166 43h12v12h-12zM254 49h22v12h-22zM379 90h12v12h-12zM298 248h22v12h-22zM85 356h22v12h-22zM399 380h22v12h-22z"/>
            <text x="172" y="52">1</text><text x="265" y="58">168</text><text x="385" y="99">5</text><text x="309" y="257">168</text><text x="96" y="365">246</text><text x="410" y="389">168</text>
            <path class="motorway" d="M57 237h14l3 2v8l-3 2h-14l-3-2v-8zM202 240h14l3 2v8l-3 2h-14l-3-2v-8z"/>
            <g class="on-blue"><text x="64" y="246">12</text><text x="209" y="249">12</text></g>
          </g>
        </g>

        <!-- place names -->
        <g class="places">
          <g transform="translate(-3,-1)">
            <text x="42" y="148">Friesack</text><text x="88" y="176">Wiesenaue</text><text x="182" y="56">Fehrbellin</text><text x="369" y="115">Kremmen</text><text class="from" x="3" y="167">rne</text><text x="139" y="224">Paulinenaue</text><text x="222" y="211">Dreibrück</text><text x="105" y="261">Pessin</text><text x="118" y="281">Retzow</text><text class="from" x="3" y="261">en</text><text class="from" x="3" y="305">sen</text><text x="262" y="302">Nauen</text><text x="343" y="323">Brieselang</text><text x="56" y="348">Märkisch Luch</text><text x="303" y="374">Wustermark</text><text class="from" x="403" y="194">Marwitz</text><text class="from" x="335" y="264">Schönwalde-Glien</text><text class="from" x="378" y="355">Falkensee</text><text class="from" x="347" y="379">Dallgow-Döberitz</text>
          </g>
          <g transform="translate(427,-1)">
            <text x="355" y="19">Marienwerder</text><text x="94" y="123">Oranienburg</text><text x="388" y="111">Biesenthal</text><text class="from" x="407" y="138">Sydower Fließ</text><text x="374" y="162">Rüdnitz</text><text x="121" y="201">Birkenwerder</text><text x="51" y="207">Velten</text><text x="121" y="217">Hohen</text><text x="121" y="229">Neuendorf</text><text x="332" y="199">Bernau</text><text x="332" y="211">bei Berlin</text><text x="312" y="249">Panketal</text><text x="65" y="271">Hennigsdorf</text><text x="337" y="332">Ahrensfelde</text><text class="from" x="426" y="198">Beiersdorf-Freudenberg</text><text class="from" x="422" y="273">Werneuchen</text><text class="from" x="428" y="397">Petershagen-Eggersdorf</text>
            <g class="nature"><text class="slant" x="183" y="16">Obere</text><text class="slant" x="183" y="30">Havelniederung</text><text x="250" y="125">Naturpark</text><text x="250" y="139">Barnim</text><text class="slant" x="88" y="247">Stolpe</text></g>
          </g>
          <g transform="translate(857,-1)">
            <text x="62" y="25">Eberswalde</text><text x="166" y="28">Niederfinow</text><text x="323" y="7">Osinow Dolny</text><text x="186" y="63">Falkenberg</text><text x="244" y="84">Bad</text><text x="245" y="96">Freienwalde</text><text x="349" y="80">Oderaue</text><text x="98" y="101">Breydin</text><text x="313" y="166">Wriezen</text><text class="from" x="394" y="156">Neule</text><text x="160" y="180">Höhenland</text><text x="332" y="198">Bliesdorf</text><text x="384" y="231">Neutrebbin</text><text x="265" y="251">Reichenow-Möglin</text><text x="206" y="266">Prötzel</text><text class="from" x="351" y="315">Neuhardenbe</text><text x="127" y="351">Strausberg</text><text x="268" y="378">Waldsieversdorf</text>
            <g class="nature"><text class="from" x="413" y="55">C</text><text class="from" x="415" y="69">K</text><text class="slant" x="278" y="330">Naturpark</text><text class="slant" x="278" y="344">Märkische</text><text class="slant" x="278" y="358">Schweiz</text></g>
          </g>
          <g transform="translate(-3,399)">
            <text x="70" y="16">Beetzseeheide</text><text x="142" y="15">Päwesin</text><text class="from" x="3" y="60">etzsee</text><text x="143" y="64">Roskow</text><text class="from" x="3" y="134">lenburg</text><text x="189" y="145">Groß Kreutz</text><text class="town" x="395" y="161">Potsdam</text><text x="254" y="191">Werder</text><text x="113" y="217">Kloster Lehnin</text><text x="299" y="254">Schwielowsee</text><text x="57" y="293">Golzow</text><text x="100" y="316">Planebruch</text><text x="357" y="302">Seddiner See</text><text x="326" y="341">Beelitz</text><text x="245" y="358">Borkheide</text><text x="174" y="402">Brück</text>
            <text class="river" x="241" y="71" transform="rotate(20 241 71)">Havel</text>
            <g class="nature"><text class="slant" x="392" y="28">Königswald</text><text class="slant" x="392" y="42">mit Havelseen</text><text class="slant" x="392" y="56">und Seeburger</text><text class="slant" x="392" y="70">Agrarlandschaft</text><text class="slant" x="169" y="114">Brandenburger</text><text class="slant" x="169" y="128">Osthavelniederung</text><text class="slant from" x="0" y="394">Hoher</text><text class="slant from" x="3" y="408">en Belziger</text></g>
          </g>
          <g transform="translate(427,399)">
            <text class="from" x="375" y="12">Hoppegarten</text><text x="119" y="152">Teltow</text><text x="76" y="168">Stahnsdorf</text><text x="295" y="158">Schönefeld</text><text x="212" y="211">Blankenfelde-Mahlow</text><text x="375" y="237">Wildau</text><text x="372" y="267">Königs</text><text x="372" y="279">Wusterhausen</text><text x="109" y="267">Ludwigsfelde</text><text x="309" y="310">Mittenwalde</text><text x="385" y="327">Bestensee</text><text x="82" y="366">Trebbin</text><text x="249" y="367">Zossen</text><text x="225" y="402">Am Mellensee</text>
            <g class="nature"><text x="79" y="54">Forst</text><text x="79" y="68">Grunewald</text></g>
          </g>
          <g transform="translate(857,399)">
            <text x="310" y="21">Müncheberg</text><text class="from" x="403" y="13">Vier</text><text x="98" y="52">Rüdersdorf</text><text x="86" y="114">Grünheide</text><text x="86" y="126">(Mark)</text><text x="34" y="120">Erkner</text><text class="from" x="414" y="112">Fa</text><text x="337" y="150">Steinhöfel</text><text x="29" y="157">Gosen-Neu</text><text x="28" y="169">Zittau</text><text x="260" y="187">Fürstenwalde</text><text x="325" y="204">Berkenbrück</text><text x="125" y="216">Spreenhagen</text><text x="236" y="232">Rauen</text><text class="from" x="399" y="221">Bries</text><text x="256" y="299">Bad Saarow</text><text x="173" y="323">Storkow</text><text x="57" y="328">Heidesee</text><text x="223" y="362">Wendisch</text><text x="223" y="374">Rietz</text><text class="from" x="301" y="354">Rietz-Neuendorf</text>
            <g class="nature"><text class="slant" x="70" y="392">Naturpark</text><text class="slant" x="70" y="406">Dahme-Heideseen</text></g>
          </g>
          <path class="pin" d="M640 400C637 388 627 384 627 376.500a13 13 0 0 1 26 0C653 384 643 388 640 400Z"/>
          <circle class="pin-dot" cx="640" cy="376" r="5"/>
          <text class="capital" x="640" y="407">Berlin</text>
        </g>
      </svg>

      <div class="map-types">
        <button class="map-type map-type-on" type="button">Map</button>
        <button class="map-type" type="button">Satellite</button>
      </div>
      <div class="map-corner">
        <button class="map-btn" type="button" aria-label="Toggle fullscreen"><svg width="18" height="18" viewBox="0 0 18 18"><path fill="#666" d="M0 0h6v2H2v4H0zM12 0h6v6h-2V2h-4zM0 12h2v4h4v2H0zM16 12h2v6h-6v-2h4z"/></svg></button>
      </div>
      <div class="map-tools">
        <button class="map-btn" type="button" aria-label="Street view"><svg width="18" height="30" viewBox="0 0 18 30"><path fill="#fbbc2c" stroke="#b8860b" stroke-width=".6" d="M4 11h10q2 0 2.500 2L18 20l-3 1-1-3v11h-4v-7H8v7H4V18l-1 3-3-1 1.500-7Q2 11 4 11Z"/><circle cx="9" cy="6" r="5" fill="#fbbc2c" stroke="#b8860b" stroke-width=".6"/><path fill="#e8752b" d="M5 11h8l-4 6z"/></svg></button>
        <div class="zoom">
          <button class="zoom-btn" type="button" aria-label="Zoom in"><svg width="18" height="18" viewBox="0 0 18 18"><path fill="#666" d="M7 0h4v7h7v4h-7v7H7v-7H0V7h7z"/></svg></button>
          <button class="zoom-btn" type="button" aria-label="Zoom out"><svg width="18" height="18" viewBox="0 0 18 18"><path fill="#666" d="M0 7h18v4H0z"/></svg></button>
        </div>
      </div>
      <a class="logo" href="#" aria-label="Google"><span class="g-blue">G</span><span class="g-red">o</span><span class="g-yellow">o</span><span class="g-blue">g</span><span class="g-green">l</span><span class="g-red">e</span></a>
      <div class="credits">
        <button class="credit" type="button">Keyboard shortcuts</button>
        <span class="credit">Map data ©2022 GeoBasis-DE/BKG (©2009), Google</span>
        <a class="credit" href="#">Terms of Use</a>
      </div>
    </section>
  </div>
</main>
</body>
</html>
```
FILE: styles.css
```css
* { box-sizing: border-box; }

body {
  margin: 0;
  background: #fff;
  color: #262626;
  font: 13px/22px "Noto Sans", "Open Sans", sans-serif;
}

button, input { font: inherit; color: inherit; }
button { border: 0; margin: 0; padding: 0; cursor: pointer; }

.page { padding: 80px 13px 40px 88px; }

/* search */
.search {
  display: flex;
  align-items: flex-start;
  gap: 51px;
  margin: 0 500px 51px 512px;
}
.search-field { flex: 1; }
.search-group { display: flex; }
.search-input {
  flex: 1;
  height: 40px;
  padding: 0 11px;
  border: 1px solid #40a9ff;
  border-radius: 2px 0 0 2px;
  outline: 0;
  box-shadow: 0 0 0 2px rgba(24, 144, 255, .2);
  font-size: 15px;
}
.btn { background: #1890ff; color: #fff; border-radius: 2px; }
.btn-search { position: relative; width: 79px; height: 40px; font-size: 15px; border-radius: 0 2px 2px 0; }
.btn-locate {
  display: grid;
  place-items: center;
  width: 62px;
  height: 40px;
  box-shadow: 0 2px 0 rgba(0, 0, 0, .045);
}
.suggestions {
  position: relative;
  margin: 0;
  padding: 0;
  list-style: none;
  background: #fff;
  box-shadow: 0 2px 6px rgba(0, 0, 0, .15);
}
.suggestion { height: 46px; padding: 0 12px; line-height: 46px; border-bottom: 1px solid #fafafa; }

/* two columns */
.content { display: grid; grid-template-columns: 4fr 5fr; gap: 101px; align-items: start; }

.btn-delete { display: block; width: 127px; height: 32px; background: #ff4d4f; margin-bottom: 6px; }

.table { width: 100%; table-layout: fixed; border-collapse: separate; border-spacing: 0; }
.col-check { width: 32px; }
.col-lat { width: 215px; }
.col-lng { width: 160px; }
.table th, .table td { height: 55px; padding: 0 16px; text-align: left; border-bottom: 1px solid #f0f0f0; }
.table th { background: #fafafa; font-weight: 600; }
.table .check { padding: 0 8px; }
.table .split {
  background: linear-gradient(#ebebeb, #ebebeb) right center / 1px 22px no-repeat #fafafa;
}
.check input {
  display: block;
  appearance: none;
  width: 16px;
  height: 16px;
  margin: 0;
  border: 1px solid #d9d9d9;
  border-radius: 2px;
  background: #fff;
}

.pagination { display: flex; justify-content: flex-end; gap: 8px; margin-top: 16px; }
.page-btn {
  display: grid;
  place-items: center;
  width: 32px;
  height: 32px;
  border: 1px solid #d9d9d9;
  border-radius: 2px;
  background: #fff;
}
.page-btn path { fill: none; stroke: #bfbfbf; }
.page-current { border-color: #1890ff; color: #1890ff; font-weight: 500; }

.summary { margin-top: 72px; text-align: center; }
.summary-line { margin: 0 0 18px; font-size: 26px; line-height: 40px; font-weight: 600; }

/* map */
.map { position: relative; aspect-ratio: 1280 / 801; overflow: hidden; background: #bbe2c6; }
.map-canvas { position: absolute; width: 100%; height: 100%; }
.map button { font-family: Roboto, sans-serif; }

.land { fill: #bbe2c6; }
.park { fill: #a8dab5; }
.forest { fill: #9ed6ad; }
.urban { fill: #e8eaed; }
.fallow { fill: #e1e3e6; }
.sand { fill: #f0e6d5; }
.water { fill: #9cc0f9; }
.stream, .border-river, .street, .minor, .major, .city-limit { fill: none; stroke-linejoin: round; stroke-linecap: round; }
.stream { stroke: #9cc0f9; stroke-width: 3; }
.border-river { stroke: #5f6b8c; stroke-width: 6; }
.street { stroke: #fff; stroke-width: 4; }
.city-grid { fill: url(#streets); }
.minor { stroke: #fff; stroke-width: 4; }
.major { stroke: #fff; stroke-width: 6; }
.city-limit { stroke: #80868b; stroke-width: 3; stroke-dasharray: 6 6; }

.arterial-edge, .arterial-fill, .ring-edge, .ring-fill, .highway-edge, .highway-fill { fill: none; stroke-linejoin: round; stroke-linecap: round; }
.arterial-edge { stroke: #f6c863; stroke-width: 10; }
.arterial-fill { stroke: #fdeab8; stroke-width: 5; }
.ring-edge { stroke: #f6b42f; stroke-width: 13; }
.ring-fill { stroke: #fde3a0; stroke-width: 6; }
.highway-edge { stroke: #f5b02a; stroke-width: 16; }
.highway-fill { stroke: #fdeabf; stroke-width: 8; }

.shield { font: 500 9px Roboto, sans-serif; text-anchor: middle; fill: #3c4043; }
.plate { fill: #fdd835; stroke: #e0b400; }
.motorway { fill: #3b78c8; }
.euro { fill: #689f38; }
.on-blue { fill: #fff; font-weight: 700; }

.places {
  font: 12px Roboto, sans-serif;
  text-anchor: middle;
  fill: #202124;
  stroke: #fff;
  stroke-width: 2px;
  stroke-opacity: .8;
  stroke-linejoin: round;
  paint-order: stroke;
}
.places .from { text-anchor: start; }
.nature { font-size: 14px; fill: #188038; }
.slant { font-style: italic; }
.town { font-size: 13px; font-weight: 500; }
.river { font-size: 14px; fill: #1a56c4; font-style: italic; stroke: none; }
.capital { font-size: 19px; font-weight: 500; }
.pin { fill: #ea4335; stroke: #c5221f; stroke-width: 1px; }
.pin-dot { fill: #b31412; stroke: none; }

.map-types {
  position: absolute;
  top: 10px;
  left: 10px;
  display: flex;
  background: #fff;
  border-radius: 2px;
  box-shadow: 0 1px 4px rgba(0, 0, 0, .3);
}
.map-type { width: 110px; height: 40px; background: none; color: #565656; font-size: 18px; }
.map-type-on { width: 82px; color: #000; font-weight: 500; border-right: 1px solid #e6e6e6; }

.map-btn, .zoom {
  display: grid;
  place-items: center;
  width: 40px;
  background: #fff;
  border-radius: 2px;
  box-shadow: 0 1px 4px rgba(0, 0, 0, .3);
}
.map-btn { height: 40px; }
.map-corner { position: absolute; top: 10px; right: 10px; }
.map-tools { position: absolute; right: 10px; bottom: 24px; display: grid; gap: 32px; }
.zoom-btn { display: grid; place-items: center; width: 30px; height: 40px; background: none; }
.zoom-btn + .zoom-btn { height: 41px; border-top: 1px solid #e6e6e6; }

.logo {
  position: absolute;
  left: 10px;
  bottom: 2px;
  font: 500 18px/22px Lato, sans-serif;
  text-decoration: none;
  text-shadow: 0 0 1px #fff, 1px 1px 0 #fff, -1px -1px 0 #fff, 1px -1px 0 #fff, -1px 1px 0 #fff;
}
.g-blue { color: #4285f4; }
.g-red { color: #ea4335; }
.g-yellow { color: #fbbc05; }
.g-green { color: #34a853; }

.credits {
  position: absolute;
  right: 0;
  bottom: 0;
  display: flex;
  height: 14px;
  font: 10px/14px Roboto, sans-serif;
}
.credit { padding: 0 6px; background: rgba(245, 245, 245, .7); color: #222; text-decoration: none; }
.credit + .credit { border-left: 1px solid rgba(200, 210, 200, .7); }
button.credit { font-size: 10px; line-height: 14px; }
```
